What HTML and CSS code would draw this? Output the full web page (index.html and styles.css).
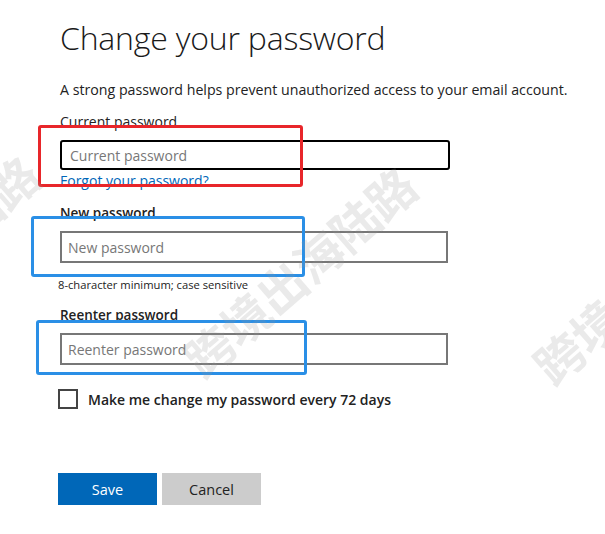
FILE: index.html
```html
<!DOCTYPE html>
<html lang="en">
<head>
    <meta charset="UTF-8">
    <meta name="viewport" content="width=device-width, initial-scale=1.0">
    <title>Change your password</title>
    <link rel="stylesheet" href="styles.css">
</head>
<body>
    <div class="page">
        <h1>Change your password</h1>
        <p class="intro">A strong password helps prevent unauthorized access to your email account.</p>

        <form class="pw-form">
            <div class="field field-current">
                <label for="current">Current password</label>
                <input type="password" id="current" class="focused" placeholder="Current password">
                <a href="#" class="forgot">Forgot your password?</a>
            </div>

            <div class="field field-new">
                <label for="newpw" class="strong">New password</label>
                <input type="password" id="newpw" placeholder="New password">
                <span class="hint">8-character minimum; case sensitive</span>
            </div>

            <div class="field field-again">
                <label for="again" class="strong">Reenter password</label>
                <input type="password" id="again" placeholder="Reenter password">
            </div>

            <label class="check">
                <span class="box"></span>
                Make me change my password every 72 days
            </label>

            <div class="actions">
                <button type="submit" class="btn btn-save">Save</button>
                <button type="button" class="btn btn-cancel">Cancel</button>
            </div>
        </form>
    </div>

    <!-- annotation boxes -->
    <div class="mark mark-red"></div>
    <div class="mark mark-blue1"></div>
    <div class="mark mark-blue2"></div>

    <!-- watermark -->
    <div class="wm wm1">跨境出海陆路</div>
    <div class="wm wm2">跨境出海陆路</div>
    <div class="wm wm3">跨境出海陆路</div>
</body>
</html>
```

FILE: styles.css
```css
body {
    margin: 0;
    background: #fff;
    font-family: "Open Sans", "Noto Sans", sans-serif;
    color: #222;
    overflow: hidden;
}

.page {
    padding: 14px 0 0 60px;
}

h1 {
    margin: 0;
    font-size: 32px;
    font-weight: 300;
    color: #1a1a1a;
    line-height: 48px;
    letter-spacing: -0.2px;
}

.intro {
    margin: 18px 0 0;
    font-size: 14.2px;
    line-height: 20px;
}

.pw-form {
    margin-top: 12px;
}

.field {
    display: flex;
    flex-direction: column;
    align-items: flex-start;
}

.field label {
    font-size: 14px;
    line-height: 20px;
}

.field .strong {
    font-weight: 600;
    font-size: 13.5px;
}

.field input {
    box-sizing: border-box;
    width: 388px;
    height: 32px;
    margin-top: 8px;
    padding: 0 6px;
    border: 2px solid #777;
    border-radius: 0;
    font-family: inherit;
    font-size: 14px;
    color: #222;
    outline: none;
}

.field input::placeholder {
    color: #777;
}

.field input.focused {
    width: 390px;
    height: 30px;
    padding: 0 8px;
    border-color: #000;
    border-radius: 3px;
}

.forgot {
    margin-top: 1px;
    font-size: 14px;
    line-height: 20px;
    color: #0067b8;
    text-decoration: none;
}

.field-new {
    margin-top: 12px;
}

.hint {
    margin: 15px 0 0 -2px;
    font-size: 11.2px;
    line-height: 14px;
}

.field-again {
    margin-top: 13px;
}

.check {
    display: flex;
    align-items: center;
    gap: 10px;
    height: 20px;
    margin: 24px 0 0 -2px;
    font-size: 14px;
    font-weight: 600;
    color: #222;
}

.box {
    width: 16px;
    height: 16px;
    border: 2px solid #444;
}

.actions {
    display: flex;
    gap: 5px;
    margin: 64px 0 0 -2px;
}

.btn {
    width: 99px;
    height: 32px;
    border: none;
    font-family: inherit;
    font-size: 14.5px;
}

.btn-save {
    background: #0067b8;
    color: #fff;
}

.btn-cancel {
    background: #ccc;
    color: #222;
}

/* annotations */
.mark {
    position: absolute;
    border-radius: 3px;
    pointer-events: none;
}

.mark-red {
    left: 38px;
    top: 125px;
    width: 259px;
    height: 56px;
    border: 3px solid #e8262a;
}

.mark-blue1 {
    left: 31px;
    top: 216px;
    width: 268px;
    height: 55px;
    border: 3px solid #2a8fe6;
}

.mark-blue2 {
    left: 36px;
    top: 320px;
    width: 265px;
    height: 49px;
    border: 3px solid #2a8fe6;
}

/* watermark */
.wm {
    position: absolute;
    font-family: "Noto Sans CJK SC", sans-serif;
    font-weight: 700;
    font-size: 48px;
    line-height: 48px;
    color: rgba(150, 150, 150, 0.2);
    white-space: nowrap;
    transform: rotate(-41deg);
    transform-origin: left center;
    pointer-events: none;
}

.wm1 {
    left: -187px;
    top: 330px;
}

.wm2 {
    left: 190px;
    top: 341px;
}

.wm3 {
    left: 540px;
    top: 348px;
}
```
